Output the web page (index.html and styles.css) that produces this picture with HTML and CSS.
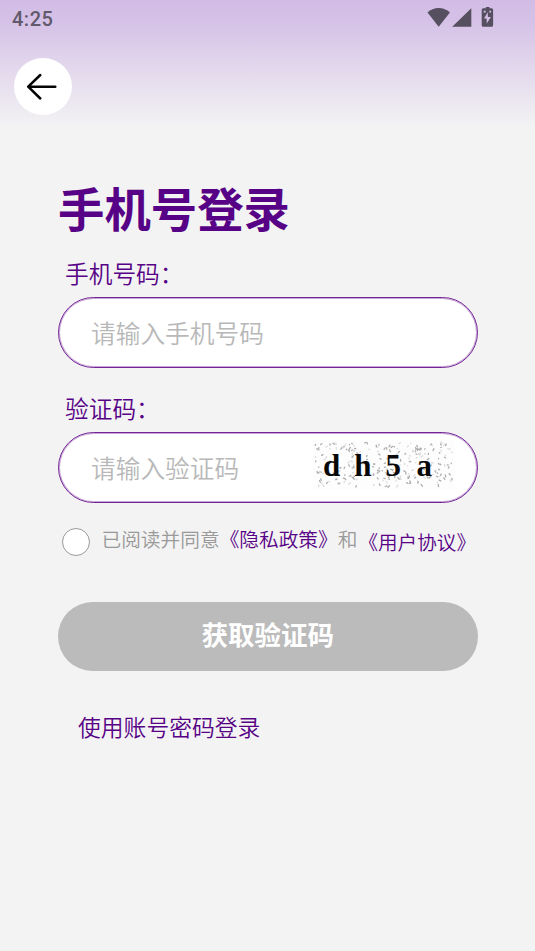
FILE: index.html
```html
<!DOCTYPE html>
<html lang="zh-CN">
<head>
<meta charset="utf-8">
<title>手机号登录</title>
<link rel="stylesheet" href="styles.css">
</head>
<body>
<header class="top">
  <div class="status">
    <span class="time">4:25</span>
    <svg class="status-icons" width="70" height="28" viewBox="0 0 70 28" fill="#564f5f">
      <path d="M.5 12.400C3.500 9.500 7.300 7.900 11.700 7.900s8.200 1.600 11.200 4.500L11.700 26.700z"/>
      <path d="M44.300 8.200V26.700H25.200z"/>
      <path fill-rule="evenodd" d="M58.800 7h3.700v1.300h2.100q1.500 0 1.500 1.500v15.400q0 1.500-1.500 1.500h-8.400q-1.500 0-1.500-1.500V9.800q0-1.500 1.500-1.500h2.600zM60.800 12.200l-3.800 6.300h2.700v5l4.200-6.500h-3.100zM56.700 10.800v1.800h2v-1.800zM62.300 10.800v1.800h1.800v-1.800z"/>
    </svg>
  </div>
  <button class="back" aria-label="返回">
    <svg width="32" height="30" viewBox="0 0 32 30" fill="none" stroke="#050505" stroke-width="2.500" stroke-linecap="round" stroke-linejoin="round">
      <path d="M29.300 14.700H2.200M14.300 3L2.200 14.700L14.300 26.500"/>
    </svg>
  </button>
</header>
<main class="form">
  <h1>手机号登录</h1>
  <label class="label" for="phone">手机号码：</label>
  <div class="field"><input id="phone" placeholder="请输入手机号码"></div>
  <label class="label second" for="code">验证码：</label>
  <div class="field">
    <input id="code" placeholder="请输入验证码">
    <div class="captcha">
      <svg class="noise" width="142" height="50" viewBox="0 0 142 50"><path id="light"/><path id="dark"/></svg>
      <span>d</span><span>h</span><span>5</span><span>a</span>
    </div>
  </div>
  <div class="agree">
    <span class="radio"></span>
    <span class="agree-text">已阅读并同意<a>《隐私政策》</a>和</span><a class="terms">《用户协议》</a>
  </div>
  <button class="submit">获取验证码</button>
  <a class="alt">使用账号密码登录</a>
</main>
<script src="noise.js"></script>
</body>
</html>
```
FILE: styles.css
```css
* { box-sizing: border-box; }
body {
  margin: 0;
  height: 951px;
  overflow: hidden;
  background: linear-gradient(#d2bce6 0, #d5c1e7 20px, #f3f3f3 128px) no-repeat #f3f3f3;
  font-family: "Noto Sans CJK SC", sans-serif;
  font-weight: 350;
  color: #570286;
}
button, input { font-family: inherit; font-weight: inherit; border: 0; padding: 0; margin: 0; }
.top { height: 178px; }
.status {
  height: 58px;
  padding: 0 38px 0 12px;
  display: flex;
  justify-content: space-between;
  align-items: flex-start;
}
.time {
  font: 500 20px/24px Roboto, sans-serif;
  letter-spacing: .5px;
  color: #625a6b;
  padding-top: 7px;
}
.status-icons { margin-right: .5px; }
.back {
  display: flex;
  align-items: center;
  justify-content: center;
  width: 57.500px;
  height: 57px;
  margin-left: 14px;
  padding-right: 2px;
  border-radius: 50%;
  background: #fff;
}
.form {
  width: 420.500px;
  margin-left: 57.500px;
  display: flex;
  flex-direction: column;
}
h1 { margin: 0 0 0 .500px; font-size: 46.400px; line-height: 58px; font-weight: 700; }
.label { margin: 20px 0 7px 7.500px; font-size: 23.700px; line-height: 34px; }
.second { margin-top: 23px; }
.field {
  display: flex;
  align-items: center;
  height: 71px;
  padding-left: 32.500px;
  border: 1px solid #732497;
  border-radius: 36px;
  background: #fff;
  box-shadow: inset 0 0 0 1px rgb(115 36 151 / 40%);
}
.field input {
  flex: 1;
  min-width: 0;
  height: 40px;
  margin-bottom: 2px;
  background: none;
  outline: 0;
  font-size: 24.700px;
}
.field input::placeholder { color: #b8b8b8; opacity: 1; }
.captcha {
  position: relative;
  flex: none;
  width: 142px;
  height: 50px;
  margin: 0 22px 5px 0;
  padding-left: 10px;
  display: flex;
  background: #fdfdfd;
  color: #080808;
  font: 700 31px/52px "Liberation Serif", serif;
}
.captcha span { position: relative; width: 31.200px; }
.noise { position: absolute; inset: 0; fill: none; stroke-width: 1.300; stroke-linecap: round; }
#light { stroke: #ddd; }
#dark { stroke: #adadad; }
.agree {
  display: flex;
  align-items: center;
  height: 42px;
  margin-top: 18px;
  padding-left: 4px;
  font-size: 19.700px;
  line-height: 30px;
  white-space: nowrap;
}
.radio { width: 28.500px; height: 28.500px; border: 1px solid #999; border-radius: 50%; background: #fff; }
.agree-text { margin: 0 0 6px 11.500px; color: #999; }
.agree-text a { color: #570286; }
.terms { margin-left: 1px; font-size: 19.600px; }
.submit {
  height: 69px;
  margin-top: 39px;
  padding-bottom: 6px;
  border-radius: 35px;
  background: #bbb;
  color: #fff;
  font-size: 26.500px;
  font-weight: 700;
}
.alt { margin: 40px 0 0 20.500px; font-size: 22.800px; line-height: 32px; }
```
FILE: noise.js
```js
// Speckle strokes behind the captcha characters, from a fixed seed.
let seed = 4251;
const rand = () => (seed = (seed * 16807) % 2147483647) / 2147483647;
function specks(count) {
  let d = '';
  for (let i = 0; i < count; i++) {
    const x = 2 + rand() * 137, y = 2 + rand() * 44;
    d += `M${x.toFixed(1)} ${y.toFixed(1)}l${(rand() * 3 - 1.5).toFixed(1)} ${(rand() * 3 - 1).toFixed(1)}`;
  }
  return d;
}
document.getElementById('light').setAttribute('d', specks(110));
document.getElementById('dark').setAttribute('d', specks(150));
```
